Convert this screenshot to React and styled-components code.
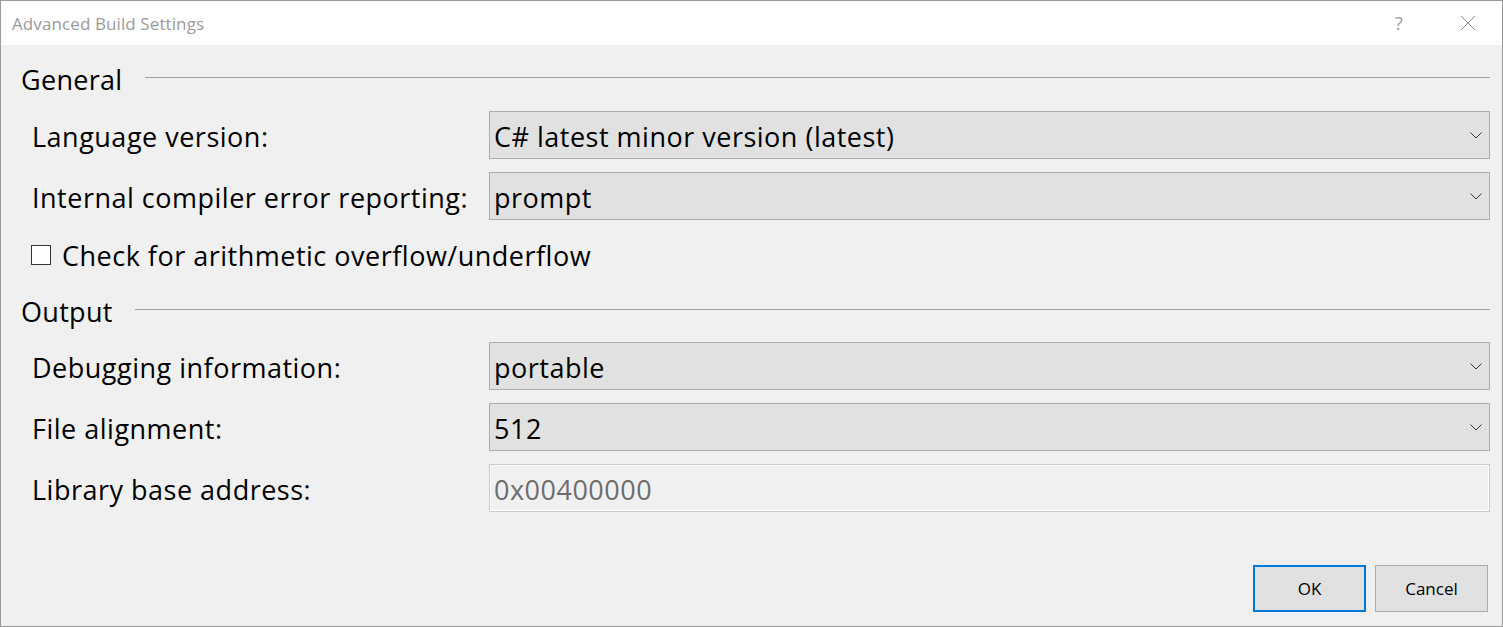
import React from 'react';
import styled, { createGlobalStyle } from 'styled-components';

const GlobalStyle = createGlobalStyle`
  html, body {
    margin: 0;
    padding: 0;
    background: #f0f0f0;
  }
  * {
    box-sizing: border-box;
  }
`;

const FONT = `"Open Sans", "Noto Sans", "Liberation Sans", sans-serif`;

/**
 * Dialog window frame
 */
const Window = styled.div`
    width: 1503px;
    height: 627px;
    border: 1px solid #9a9a9a;
    background: #f0f0f0;
    display: flex;
    flex-direction: column;
    font-family: ${FONT};
    color: #000;
`;

const TitleBar = styled.div`
    height: 44px;
    background: #fff;
    display: flex;
    align-items: center;
    padding-left: 11px;
`;

const Title = styled.div`
    flex: 1;
    font-size: 17px;
    letter-spacing: 0.1px;
    color: #9a9a9a;
`;

const TitleButton = styled.div`
    width: 46px;
    height: 44px;
    display: flex;
    align-items: center;
    justify-content: center;
    color: #9a9a9a;
    font-size: 18px;
    margin-right: ${props => props.gap || 0}px;
`;

const Content = styled.div`
    flex: 1;
    display: flex;
    flex-direction: column;
    padding: 16px 12px 14px 20px;
`;

const SectionHeader = styled.div`
    display: flex;
    align-items: center;
    height: 36px;
    margin-top: ${props => props.top || 0}px;
    font-size: 27px;
    letter-spacing: 0.3px;
`;

const Rule = styled.div`
    flex: 1;
    height: 1px;
    background: #a0a0a0;
    margin-left: ${props => props.gap}px;
    margin-top: -3px;
`;

const FormRow = styled.div`
    display: grid;
    grid-template-columns: 457px 1fr;
    align-items: center;
    height: 48px;
    margin-top: ${props => props.top || 13}px;
    padding-left: 11px;
`;

const Label = styled.div`
    font-size: 27px;
    letter-spacing: 0.5px;
    white-space: nowrap;
    padding-top: 2px;
`;

const Select = styled.div`
    height: 48px;
    border: 1px solid #adadad;
    background: #e1e1e1;
    display: flex;
    align-items: center;
    padding: 0 7px 0 4px;
    font-size: 27px;
    letter-spacing: 0.5px;
`;

const SelectText = styled.div`
    flex: 1;
    padding-top: 2px;
`;

const TextBox = styled.div`
    height: 48px;
    border: 1px solid #cccccc;
    box-shadow: inset -1px -1px 0 #ffffff, inset 1px 1px 0 #f8f8f8;
    background: #f0f0f0;
    display: flex;
    align-items: center;
    padding: 2px 4px 0;
    font-size: 27px;
    letter-spacing: 0.5px;
    color: #6d6d6d;
`;

const CheckRow = styled.label`
    display: flex;
    align-items: center;
    height: 30px;
    margin-top: 20px;
    padding-left: 10px;
    font-size: 27px;
    letter-spacing: 0.5px;
    gap: 11px;
`;

const CheckBox = styled.span`
    width: 20px;
    height: 20px;
    border: 1px solid #333;
    background: #fff;
`;

const ButtonBar = styled.div`
    margin-top: auto;
    display: flex;
    justify-content: flex-end;
    gap: 9px;
    padding-right: 2px;
`;

const Button = styled.div`
    width: 113px;
    height: 47px;
    display: flex;
    align-items: center;
    justify-content: center;
    background: #e1e1e1;
    border: ${props => props.primary ? '2px solid #0078d7' : '1px solid #adadad'};
    font-size: 17px;
`;

const Chevron = () => (
    <svg width="12" height="7" viewBox="0 0 12 7">
        <polyline points="0.5,0.5 6,6 11.5,0.5" fill="none" stroke="#333" strokeWidth="1" />
    </svg>
);

const CloseIcon = () => (
    <svg width="16" height="16" viewBox="0 0 16 16">
        <path d="M1 1 L15 15 M15 1 L1 15" stroke="#8a8a8a" strokeWidth="1" fill="none" />
    </svg>
);

const Dropdown = ({ value }) => (
    <Select>
        <SelectText>{value}</SelectText>
        <Chevron />
    </Select>
);

export default function App() {
    return (
        <>
            <GlobalStyle />
            <Window>
                <TitleBar>
                    <Title>Advanced Build Settings</Title>
                    <TitleButton gap={23}>?</TitleButton>
                    <TitleButton gap={11}><CloseIcon /></TitleButton>
                </TitleBar>
                <Content>
                    <SectionHeader>
                        General
                        <Rule gap={23} />
                    </SectionHeader>
                    <FormRow top={14}>
                        <Label>Language version:</Label>
                        <Dropdown value="C# latest minor version (latest)" />
                    </FormRow>
                    <FormRow>
                        <Label>Internal compiler error reporting:</Label>
                        <Dropdown value="prompt" />
                    </FormRow>
                    <CheckRow>
                        <CheckBox />
                        Check for arithmetic overflow/underflow
                    </CheckRow>
                    <SectionHeader top={23}>
                        Output
                        <Rule gap={22} />
                    </SectionHeader>
                    <FormRow>
                        <Label>Debugging information:</Label>
                        <Dropdown value="portable" />
                    </FormRow>
                    <FormRow>
                        <Label>File alignment:</Label>
                        <Dropdown value="512" />
                    </FormRow>
                    <FormRow>
                        <Label>Library base address:</Label>
                        <TextBox>0x00400000</TextBox>
                    </FormRow>
                    <ButtonBar>
                        <Button primary>OK</Button>
                        <Button>Cancel</Button>
                    </ButtonBar>
                </Content>
            </Window>
        </>
    );
}
